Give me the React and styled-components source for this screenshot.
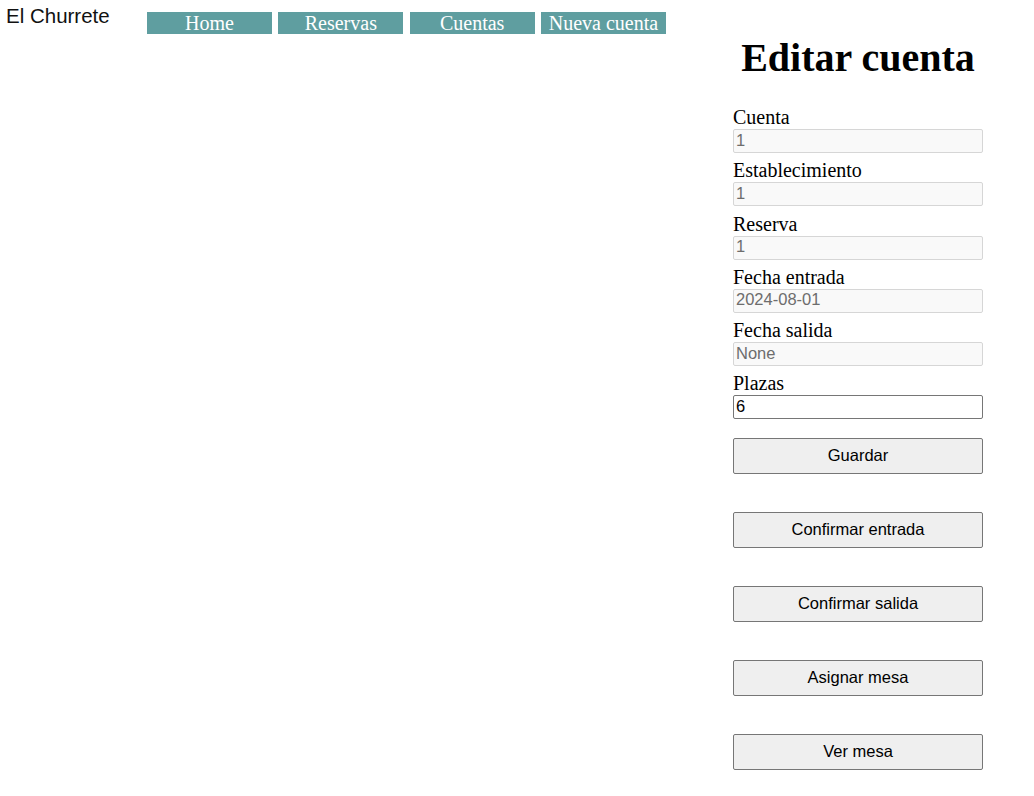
import React from 'react'
import styled, { createGlobalStyle } from 'styled-components'

const GlobalStyle = createGlobalStyle`
  body {
    margin: 0;
    background: #fff;
    font-family: "Liberation Serif", "Times New Roman", serif;
    font-size: 20px;
    color: #000;
  }
`

const Header = styled.header`
  display: flex;
  align-items: flex-start;
  height: 34px;
`

const Logo = styled.div`
  box-sizing: border-box;
  width: 147px;
  padding: 4px 0 0 6px;
  font-family: "Liberation Sans", Arial, sans-serif;
  font-size: 20.5px;
  line-height: 24px;
  color: #111;
`

const Nav = styled.nav`
  display: flex;
  gap: 6.33px;
  margin-top: 12px;
`

const NavLink = styled.a`
  display: block;
  width: 125px;
  height: 22px;
  line-height: 22px;
  background: #5f9ea0;
  color: #fff;
  text-align: center;
  text-decoration: none;
  font-size: 20px;
  cursor: pointer;
`

const Main = styled.main`
  display: flex;
  justify-content: flex-end;
  padding-right: 51px;
`

const Panel = styled.section`
  width: 250px;
`

const Title = styled.h1`
  margin: 1px 0 25px;
  font-size: 40px;
  line-height: 46px;
  font-weight: bold;
  text-align: center;
`

const Field = styled.div`
  margin-bottom: 6.3px;
`

const Label = styled.label`
  display: block;
  line-height: 23px;
`

const Input = styled.input`
  box-sizing: border-box;
  display: block;
  width: 250px;
  height: 24px;
  margin: 0;
  padding: 0 2px 2px;
  font-family: "Liberation Sans", Arial, sans-serif;
  font-size: 16.5px;
  border: 1px solid ${p => (p.disabled ? '#d6d6d6' : '#767676')};
  border-radius: 2px;
  background: ${p => (p.disabled ? '#f9f9f9' : '#fff')};
  color: ${p => (p.disabled ? '#6d6d6d' : '#000')};
`

const Actions = styled.div`
  display: flex;
  flex-direction: column;
  gap: 38px;
  margin-top: 19px;
`

const Button = styled.button`
  box-sizing: border-box;
  width: 250px;
  height: 36px;
  margin: 0;
  padding: 0 6px 2px;
  background: #efefef;
  border: 1px solid #767676;
  border-radius: 2px;
  font-family: "Liberation Sans", Arial, sans-serif;
  font-size: 16.5px;
  color: #000;
  cursor: pointer;
`

const fields = [
  { label: 'Cuenta', value: '1', disabled: true },
  { label: 'Establecimiento', value: '1', disabled: true },
  { label: 'Reserva', value: '1', disabled: true },
  { label: 'Fecha entrada', value: '2024-08-01', disabled: true },
  { label: 'Fecha salida', value: 'None', disabled: true },
  { label: 'Plazas', value: '6', disabled: false },
]

const actions = ['Guardar', 'Confirmar entrada', 'Confirmar salida', 'Asignar mesa', 'Ver mesa']

const App = () => {
  return (
    <>
      <GlobalStyle />
      <Header>
        <Logo>El Churrete</Logo>
        <Nav>
          <NavLink>Home</NavLink>
          <NavLink>Reservas</NavLink>
          <NavLink>Cuentas</NavLink>
          <NavLink>Nueva cuenta</NavLink>
        </Nav>
      </Header>
      <Main>
        <Panel>
          <Title>Editar cuenta</Title>
          <form onSubmit={e => e.preventDefault()}>
            {fields.map(f => (
              <Field key={f.label}>
                <Label>{f.label}</Label>
                <Input defaultValue={f.value} disabled={f.disabled} />
              </Field>
            ))}
            <Actions>
              {actions.map(a => (
                <Button key={a} type="button">{a}</Button>
              ))}
            </Actions>
          </form>
        </Panel>
      </Main>
    </>
  )
}

export default App
